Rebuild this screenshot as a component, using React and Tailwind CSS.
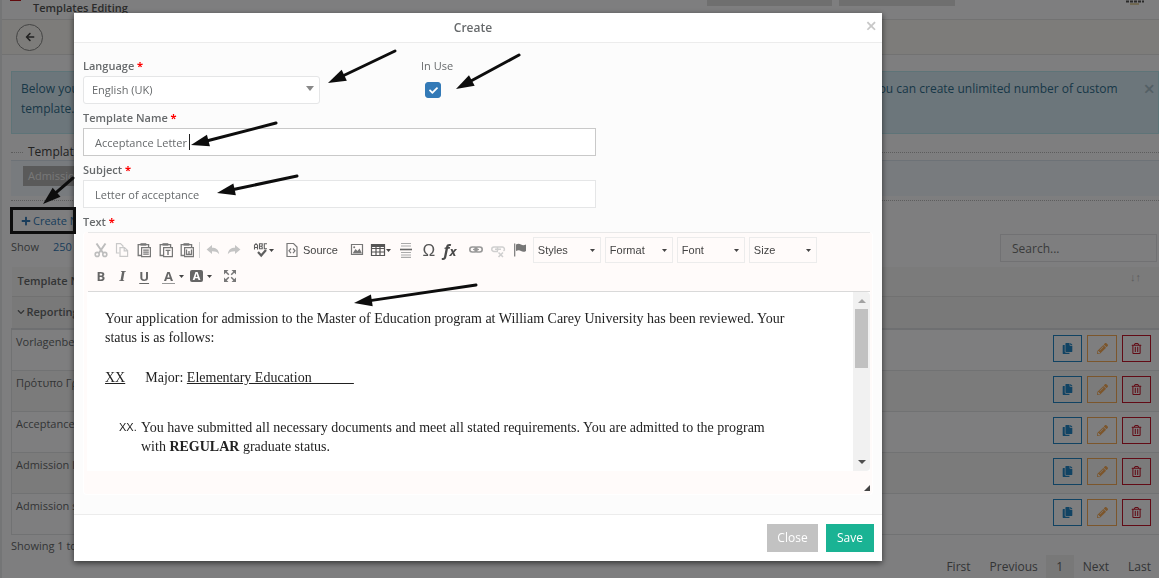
import React, { useState } from 'react';
import {
  FaArrowLeft, FaCheck, FaPlus, FaPencilAlt, FaCopy, FaRegTrashAlt, FaChevronDown,
} from 'react-icons/fa';

const rows = ['Vorlagenbeschreibung', 'Πρότυπο Γράμμα', 'Acceptance Letter', 'Admission letter', 'Admission status'];

const combos = ['Styles', 'Format', 'Font', 'Size'];

// tail x/y, tip x/y
const arrows = [
  [395, 51, 328, 83],
  [519, 55, 456, 89],
  [276, 123, 191, 145],
  [297, 176, 217, 193],
  [476, 285, 354, 303],
  [73, 178, 43, 204],
];

const Arrow = ({ from, to }) => {
  const dx = to[0] - from[0];
  const dy = to[1] - from[1];
  const len = Math.hypot(dx, dy);
  const ux = dx / len;
  const uy = dy / len;
  const bx = to[0] - ux * 18;
  const by = to[1] - uy * 18;
  return (
    <g>
      <line x1={from[0]} y1={from[1]} x2={bx} y2={by} stroke="#0d0d0d" strokeWidth="3" strokeLinecap="round" />
      <path d={`M${to[0]} ${to[1]} L${bx - uy * 6} ${by + ux * 6} L${bx + uy * 6} ${by - ux * 6} Z`} fill="#0d0d0d" />
    </g>
  );
};

const Svg = ({ children, className = 'text-[#777]' }) => (
  <svg viewBox="0 0 16 16" className={`size-4 shrink-0 ${className}`} fill="none" stroke="currentColor" strokeWidth="1.2">
    {children}
  </svg>
);

const Caret = () => (
  <svg viewBox="0 0 5 3" className="h-[3px] w-[5px] shrink-0" fill="#444"><path d="M0 0h5L2.5 3z" /></svg>
);

const ToolButton = ({ label, caret, className = '', children }) => (
  <button type="button" aria-label={label} className={`flex h-6 items-center justify-center ${className}`}>
    {children}
    {caret && <Caret />}
  </button>
);

const PasteBase = ({ children }) => (
  <Svg>
    <path d="M5 13.5H2.2V2.6H12.6V5" strokeWidth="1.3" />
    <path d="M4.5 1.2h5.8v2.4H4.5z" fill="currentColor" stroke="none" />
    <path d="M5.6 5.6h8.8v9H5.6z" />
    {children}
  </Svg>
);

const Label = ({ htmlFor, required = true, children }) => (
  <label htmlFor={htmlFor} className="block h-6 text-[11px] leading-7 font-semibold text-[#676a6c]">
    {children} {required && <span className="font-bold text-[#f00]">*</span>}
  </label>
);

const Toolbar = () => (
  <div className="mr-[2px] ml-1 border-y border-t-[#e8e8e8] border-b-[#d9d9d9] bg-[#fffbfa] px-[2px] pt-1 pb-[2px] font-['Liberation_Sans',sans-serif] text-[11px] text-[#444]">
    <div className="flex items-center">
      <div className="grid w-[108px] grid-cols-5">
        <ToolButton label="Cut">
          <Svg className="text-[#bdbdbd]">
            <path d="M3.5 1.5l6.6 9.5M12.5 1.5L5.9 11" strokeWidth="2" />
            <circle cx="4.2" cy="12.4" r="2" strokeWidth="1.6" />
            <circle cx="11.8" cy="12.4" r="2" strokeWidth="1.6" />
          </Svg>
        </ToolButton>
        <ToolButton label="Copy">
          <Svg className="text-[#c9c9c9]">
            <path d="M5.5 11H2.5V1.6h4L9 4v1.4" />
            <path d="M6 5.6h4.5L13.6 8.6v5.8H6zM10.2 5.8v3.1h3.2" />
          </Svg>
        </ToolButton>
        <ToolButton label="Paste">
          <PasteBase><path d="M7.2 8.2h5.6M7.2 10.2h5.6M7.2 12.2h5.6" /></PasteBase>
        </ToolButton>
        <ToolButton label="Paste as plain text">
          <PasteBase><path d="M7.6 8.4h4.8M10 8.4v4.6" strokeWidth="1.4" /></PasteBase>
        </ToolButton>
        <ToolButton label="Paste from Word">
          <PasteBase><path d="M7.5 7.6v4.9h5V7.6M10 9v3.5" strokeWidth="1.3" /></PasteBase>
        </ToolButton>
      </div>
      <span className="ml-px h-4 w-px bg-[#d5d5d5]" />
      <div className="ml-[2px] grid w-[43px] grid-cols-2">
        <ToolButton label="Undo">
          <Svg className="text-[#c4c4c4]">
            <path d="M1.6 7.4L7 3v2.8c4 0 6.6 1.6 7.2 6.4C12.5 9.8 10 9.2 7 9.2V12z" fill="currentColor" stroke="none" />
          </Svg>
        </ToolButton>
        <ToolButton label="Redo">
          <Svg className="text-[#c4c4c4]">
            <path d="M14.4 7.4L9 3v2.8c-4 0-6.600 1.600-7.200 6.400C3.500 9.800 6 9.200 9 9.200V12z" fill="currentColor" stroke="none" />
          </Svg>
        </ToolButton>
      </div>
      <ToolButton label="Spell check" caret className="ml-[3px] w-[30px]">
        <Svg className="text-[#5f5f5f]">
          <path d="M1.5 7.5V3.2L3 1.8l1.5 1.4v4.3M1.5 5.5h3M6.5 1.8v5h2.700V5L8.500 4.300l.7-.8V1.800zM6.500 4.300h2M14 1.800h-2.700v5H14" strokeWidth="1.1" />
          <path d="M5 10l3.200 3.500L13 8" strokeWidth="2.2" />
        </Svg>
      </ToolButton>
      <ToolButton label="Source" className="ml-[6px] gap-[3px]">
        <Svg>
          <path d="M3 1.500h6.500L13 5v9.500H3z" />
          <path d="M7 6.500L5 8.800l2 2.300M9 6.500l2 2.300-2 2.300" />
        </Svg>
        <span className="mr-2">Source</span>
      </ToolButton>
      <ToolButton label="Image" className="w-[22px]">
        <Svg>
          <path d="M2.500 2.500h11v10h-11z" />
          <path d="M3.500 11.500l3-4.500 2 2 2-2.500 2.500 5z" fill="currentColor" stroke="none" />
          <circle cx="5.200" cy="5.200" r="1" fill="currentColor" stroke="none" />
        </Svg>
      </ToolButton>
      <ToolButton label="Table" caret className="w-[26px]">
        <Svg className="text-[#555]">
          <path d="M1.500 2.500h13v11h-13zM1.500 6.500h13M1.500 10h13M6 4v9.500M10 4v9.500" />
          <path d="M1 2h14v3H1z" fill="currentColor" stroke="none" />
        </Svg>
      </ToolButton>
      <ToolButton label="Horizontal line" className="w-[25px]">
        <Svg className="text-[#aaa]">
          <path d="M3 1.500h10M3 4h10M3 10.500h10M3 13h10M3 15.400h10" />
          <path d="M2 7.500h12" stroke="#666" strokeWidth="1.600" />
        </Svg>
      </ToolButton>
      <ToolButton label="Special character" className="w-5">
        <span className="text-[17px] text-[#555]">Ω</span>
      </ToolButton>
      <ToolButton label="Formula" className="w-[22px]">
        <span className="font-['Open_Sans',sans-serif] text-[16px] leading-5 font-bold text-[#4a4a4a] italic">f<span className="text-[13px]">x</span></span>
      </ToolButton>
      <ToolButton label="Link" className="ml-1 w-[22px]">
        <Svg className="text-[#999]">
          <rect x="1.800" y="5" width="7.200" height="5" rx="2.500" strokeWidth="1.600" />
          <rect x="7" y="5" width="7.200" height="5" rx="2.500" strokeWidth="1.600" />
          <path d="M5 7.500h6" />
        </Svg>
      </ToolButton>
      <ToolButton label="Unlink" className="w-[22px]">
        <Svg className="text-[#cfcfcf]">
          <path d="M8 9.500H4a2.200 2.200 0 010-4.500h3.500v4M8 5h4a2.200 2.200 0 011.500 4M5 7.300h6" strokeWidth="1.500" />
          <path d="M8.500 10.500l4.500 4.500M13 10.500L8.500 15" strokeWidth="1.500" />
        </Svg>
      </ToolButton>
      <ToolButton label="Anchor" className="w-[22px]">
        <Svg>
          <path d="M2.700 1.500v13" />
          <path d="M4 2.500c2-1.300 3.500-1 5 0s3 1 5 0V9c-2 1.200-3.500 1-5 0S6 8 4 9z" fill="currentColor" stroke="none" />
        </Svg>
      </ToolButton>
      <div className="ml-[2px] flex gap-1">
        {combos.map((name) => (
          <div key={name} className="relative flex items-center">
            <select aria-label={name} className="h-[26px] w-[68px] appearance-none border border-[#ececec] bg-[#fffbfa] pl-1 text-[11px]">
              <option>{name}</option>
            </select>
            <span className="pointer-events-none absolute right-[6px] flex"><Caret /></span>
          </div>
        ))}
      </div>
    </div>
    <div className="flex h-[26px] items-center font-['Open_Sans',sans-serif] text-[13px] font-bold text-[#666]">
      <div className="grid w-[65px] grid-cols-3">
        <ToolButton label="Bold">B</ToolButton>
        <ToolButton label="Italic"><span className="font-['DejaVu_Serif',serif] italic">I</span></ToolButton>
        <ToolButton label="Underline"><span className="underline underline-offset-2">U</span></ToolButton>
      </div>
      <ToolButton label="Text colour" caret className="ml-[7px] w-[22px] gap-1">
        <span className="h-[15px] border-b border-[#999] px-[2px] leading-[14px]">A</span>
      </ToolButton>
      <ToolButton label="Background colour" caret className="ml-[6px] w-[22px] gap-1">
        <span className="h-3 w-[13px] shrink-0 rounded-xs bg-[#666] text-center text-[11px] leading-3 text-white">A</span>
      </ToolButton>
      <ToolButton label="Maximize" className="ml-[7px] w-[22px]">
        <Svg>
          <path d="M2 2h4.500L2 6.500zM14 2v4.500L9.500 2zM2 14V9.500L6.500 14zM14 14H9.500L14 9.500z" fill="currentColor" stroke="none" />
          <path d="M3 3l3.800 3.800M13 3L9.200 6.800M3 13l3.800-3.800M13 13L9.200 9.200" strokeWidth="1.500" />
        </Svg>
      </ToolButton>
    </div>
  </div>
);

const EditorContent = () => (
  <div className="mr-[2px] ml-[3px] flex h-[179px] bg-white">
    <div className="flex-1 overflow-hidden pt-[17px] pl-[18px] font-['Liberation_Serif',serif] text-[14px] leading-[19px] text-[#222]">
      <p>
        Your application for admission to the Master of Education program at William Carey University has been reviewed. Your
        <br />status is as follows:
      </p>
      <p className="mt-[21px]">
        <u>XX</u><span className="inline-block w-5" />Major: <u>Elementary Education______</u>
      </p>
      <div className="mt-[31px] flex">
        <span className="w-9 pl-[14px] font-['Liberation_Sans',sans-serif] text-[11px]">XX.</span>
        <p>
          You have submitted all necessary documents and meet all stated requirements. You are admitted to the program
          <br />with <b>REGULAR</b> graduate status.
        </p>
      </div>
    </div>
    <div className="flex w-[17px] flex-col items-center rounded-r-sm bg-[#f1f1f1] py-[7px]">
      <svg viewBox="0 0 8 4" className="h-1 w-2" fill="#a3a3a3"><path d="M0 4L4 0l4 4z" /></svg>
      <div className="mt-[6px] h-[59px] w-[13px] bg-[#c1c1c1]" />
      <svg viewBox="0 0 8 4" className="mt-auto h-1 w-2" fill="#505050"><path d="M0 0h8L4 4z" /></svg>
    </div>
  </div>
);

const CreateModal = () => {
  const [inUse, setInUse] = useState(true);
  const [name, setName] = useState('Acceptance Letter');
  const [subject, setSubject] = useState('Letter of acceptance');

  return (
    <div className="fixed inset-0 bg-black/50 pt-[13px] pl-[74px]">
      <div role="dialog" aria-label="Create" className="w-[808px] max-w-full bg-white shadow-[0_2px_6px_rgba(0,0,0,0.6)]">
        <div className="relative flex h-[30px] items-center justify-center border-b border-[#ececec] pr-[10px]">
          <h2 className="text-[12px] font-semibold text-[#676a6c]">Create</h2>
          <button type="button" aria-label="Dismiss" className="absolute top-[3px] right-[5px] text-[20px] leading-5 font-semibold text-[#c8c8c8]">×</button>
        </div>

        <div className="border-b border-[#ececec] bg-[#fcfcfc] px-[9px] pt-[9px] pb-[19px]">
          <div className="flex">
            <div className="w-[338px]">
              <Label htmlFor="language">Language</Label>
              <div className="relative w-[237px]">
                <select id="language" className="h-7 w-full appearance-none rounded-[3px] border border-[#e5e6e7] bg-white pl-2 text-[11px] text-[#676a6c]">
                  <option>English (UK)</option>
                </select>
                <svg viewBox="0 0 8 5" className="pointer-events-none absolute top-[10px] right-[6px] h-[5px] w-2" fill="#888"><path d="M0 0h8L4 5z" /></svg>
              </div>
            </div>
            <div>
              <label htmlFor="inuse" className="block h-6 text-[11px] leading-7 font-medium text-[#676a6c]">In Use</label>
              <div className="relative mt-[6px] ml-1 size-4">
                <input id="inuse" type="checkbox" checked={inUse} onChange={(e) => setInUse(e.target.checked)}
                  className="block size-4 appearance-none rounded-[3px] border border-[#337ab7] checked:bg-[#337ab7]"
                />
                {inUse && <FaCheck className="pointer-events-none absolute top-1 left-1 size-[9px] text-white" />}
              </div>
            </div>
          </div>

          <Label htmlFor="name">Template Name</Label>
          <div className="relative w-[513px]">
            <input id="name" type="text" value={name} onChange={(e) => setName(e.target.value)}
              className="block h-7 w-full border border-[#c9c9c9] bg-white px-[11px] text-[11px] text-[#676a6c]"
            />
            <span className="absolute top-[6px] left-[106px] h-4 w-px bg-[#222]" />
          </div>

          <Label htmlFor="subject">Subject</Label>
          <input id="subject" type="text" value={subject} onChange={(e) => setSubject(e.target.value)}
            className="block h-7 w-[513px] border border-[#e5e6e7] bg-white px-[11px] text-[11px] text-[#676a6c]"
          />

          <Label>Text</Label>
          <div className="rounded-sm border-x border-b border-white bg-[#fffbfa]">
            <Toolbar />
            <EditorContent />
            <div className="flex h-[23px] items-end justify-end pr-[2px] pb-[3px]">
              <svg viewBox="0 0 6 6" className="size-[6px]" fill="#444"><path d="M6 0v6H0z" /></svg>
            </div>
          </div>
        </div>

        <div className="flex justify-end gap-2 px-2 pt-[9px] pb-[9px] text-[12px] text-white">
          <button type="button" className="h-7 w-[51px] bg-[#c2c2c2]">Close</button>
          <button type="button" className="h-7 w-12 bg-[#1ab394]">Save</button>
        </div>
      </div>
    </div>
  );
};

const TemplatesPage = () => (
  <div className="h-screen overflow-hidden border-l-2 border-[#e9eaec] bg-[#fcfdff]">
    <header className="flex h-[19px] items-start">
      <span className="ml-2 h-px w-[11px] bg-[#c4161c]" />
      <h1 className="ml-3 text-[11px] leading-4 font-semibold text-[#555]">Templates Editing</h1>
      <span className="ml-auto h-[6px] w-[125px] bg-[#dedede]" />
      <span className="mr-[170px] ml-[7px] h-[6px] w-[116px] bg-[#dedede]" />
      <svg viewBox="0 0 20 5" className="mr-[14px] h-[5px] w-5">
        <path d="M1 1.500h18" stroke="#555" strokeWidth="2" strokeDasharray="3 1" />
        <path d="M5 4h9" stroke="#c9a94c" strokeWidth="1" />
      </svg>
    </header>
    <div className="flex h-9 items-center border-y border-[#e5e5e5] bg-[#fbf9f4] pl-[14px]">
      <button type="button" aria-label="Back" className="flex size-[27px] items-center justify-center rounded-full border border-[#888] text-[#444]">
        <FaArrowLeft className="size-[10px]" />
      </button>
    </div>

    <main className="pl-[9px]">
      <div className="mt-4 h-[63px] border border-[#bce8f1] bg-[#d9edf7] py-[7px] pl-[9px] text-[12px] leading-5 text-[#31708f]">
        <div className="flex h-5 items-center pr-[3px]">
          <span>Below you can see the list of system templates</span>
          <span className="ml-auto">but you can create unlimited number of custom</span>
          <button type="button" aria-label="Hide" className="ml-[26px] text-[20px] font-semibold text-[#a9c0cb]">×</button>
        </div>
        <p>template.</p>
      </div>

      <fieldset className="mt-[10px] border border-r-0 border-l-0 border-dotted border-[#bbb] pb-1">
        <legend className="ml-3 px-[5px] text-[12px] leading-4 text-[#444]">Template Category</legend>
        <div className="flex h-9 items-start border-t border-[#dbe4ee] bg-[#f1f6fc] pt-[5px] pl-3">
          <button type="button" className="h-5 bg-[#b4b4b4] px-[5px] text-[11px] font-medium text-[#efefef]">Admission</button>
        </div>
      </fieldset>

      <button type="button" className="mt-2 ml-[10px] flex h-6 items-center gap-[2px] text-[11px] text-[#337ab7]">
        <FaPlus className="size-[10px]" />Create New
      </button>

      <div className="flex h-[34px] items-start justify-between pt-px pr-[2px] text-[11px] text-[#676a6c]">
        <div className="flex gap-[14px] pt-[5px]"><span>Show</span><span className="text-[#337ab7]">250</span></div>
        <input type="text" aria-label="Search" placeholder="Search..."
          className="h-7 w-[157px] border border-[#e2e3e6] bg-transparent px-[11px] text-[12px] placeholder:text-[#777]"
        />
      </div>

      <table className="w-full border-collapse text-left text-[11px] text-[#676a6c]">
        <thead>
          <tr className="h-[29px] border-b border-[#e2e2e2] bg-[#f6f6f6]">
            <th className="pl-[6px] font-semibold">Template Name</th>
            <th className="w-[106px] pr-[18px] pb-2 text-right font-normal text-[#bbb]">↓↑</th>
          </tr>
        </thead>
        <tbody>
          <tr className="h-[33px] border-b-2 border-[#dcdee2] bg-[#f2f2f2]">
            <td colSpan="2" className="pl-[5px] font-semibold">
              <span className="flex items-center gap-[2px]"><FaChevronDown className="size-2" />Reporting</span>
            </td>
          </tr>
          {rows.map((row) => (
            <tr key={row} className="h-[41px] border-b border-l border-[#e3e4e7] odd:bg-[#f7f7f7] even:bg-[#fcfdff]">
              <td className="pt-1 pl-1 align-top">{row}</td>
              <td className="pb-[3px]">
                <div className="flex gap-[5px]">
                  <button type="button" aria-label="Copy" className="flex h-[27px] w-[29px] items-center justify-center border border-[#2386c6] text-[#2386c6]"><FaCopy className="size-[11px]" /></button>
                  <button type="button" aria-label="Edit" className="flex h-[27px] w-[30px] items-center justify-center border border-[#f8ac59] text-[#f8ac59]"><FaPencilAlt className="size-[11px]" /></button>
                  <button type="button" aria-label="Delete" className="flex h-[27px] w-[29px] items-center justify-center border border-[#c4162a] text-[#c4162a]"><FaRegTrashAlt className="size-[11px]" /></button>
                </div>
              </td>
            </tr>
          ))}
        </tbody>
      </table>

      <div className="pt-[2px] text-[11px] leading-[18px] text-[#676a6c]">Showing 1 to 5 of 5 entries</div>
      <nav className="flex h-6 items-center justify-end pr-2 text-[12px] text-[#676a6c]">
        <a href="#first">First</a>
        <a href="#prev" className="ml-[19px]">Previous</a>
        <a href="#1" className="ml-2 flex h-full w-7 items-center justify-center bg-[#f0f0f0]">1</a>
        <a href="#next" className="ml-[9px]">Next</a>
        <a href="#last" className="ml-[19px]">Last</a>
      </nav>
    </main>
  </div>
);

const App = () => (
  <div className="font-['Open_Sans',sans-serif]">
    <TemplatesPage />
    <CreateModal />
    {/* guide arrows and highlight box drawn over everything */}
    <svg className="pointer-events-none fixed inset-0 h-full w-full">
      {arrows.map(([x1, y1, x2, y2]) => (
        <Arrow key={x1} from={[x1, y1]} to={[x2, y2]} />
      ))}
      <rect x="11.500" y="208.500" width="63" height="24" fill="none" stroke="#0d0d0d" strokeWidth="3" />
    </svg>
  </div>
);

export default App;
